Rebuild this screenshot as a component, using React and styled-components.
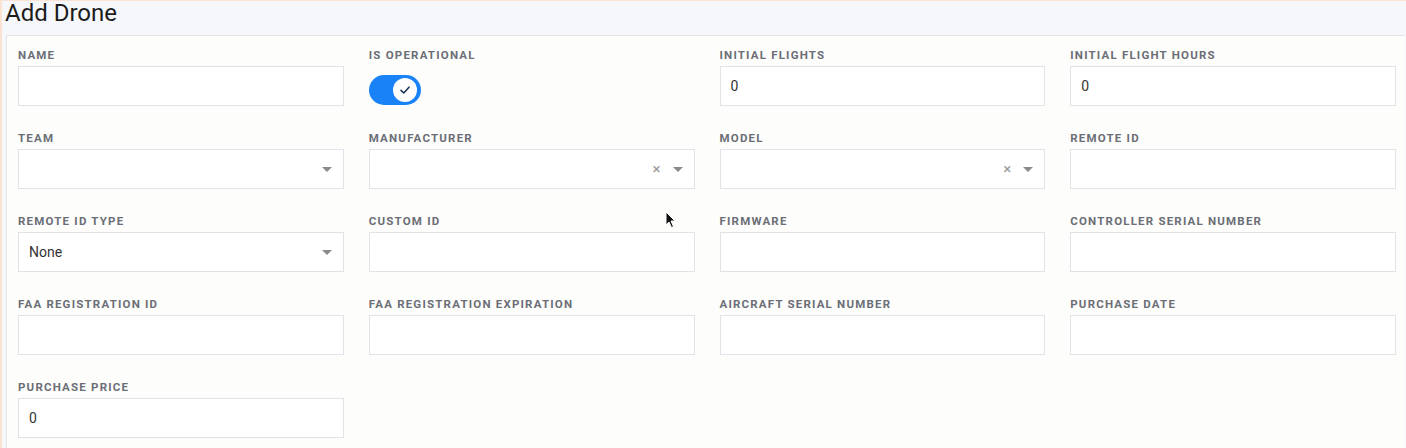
import React from 'react';
import styled, { createGlobalStyle } from 'styled-components';

const Global = createGlobalStyle`
  html, body {
    margin: 0;
    padding: 0;
    background: #f5f7fa;
    font-family: Roboto, "Noto Sans", "Liberation Sans", sans-serif;
  }
  body {
    border-top: 1px solid #fbe2d3;
    border-left: 2px solid #fbe2d3;
    min-height: 447px;
    box-sizing: border-box;
  }
  * { box-sizing: border-box; }
`;

const Page = styled.div`
  position: relative;
  padding: 0 1px 0 4px;
`;

const Title = styled.h1`
  margin: 0 0 0 -1px;
  height: 34px;
  font-size: 24px;
  line-height: 25px;
  font-weight: 400;
  color: #1c1c1c;
`;

const Card = styled.div`
  background: #fdfdfc;
  border: 1px solid #e3e4e6;
  border-right: none;
  padding: 11px 9px 10px 11px;
  display: grid;
  grid-template-columns: repeat(4, 1fr);
  column-gap: 25px;
  row-gap: 24px;
`;

const Field = styled.div`
  display: flex;
  flex-direction: column;
`;

const Label = styled.label`
  font-size: 11.5px;
  line-height: 16px;
  font-weight: 700;
  letter-spacing: 1.2px;
  text-transform: uppercase;
  color: #6b6e76;
  margin-bottom: 3px;
`;

const Box = styled.div`
  height: 40px;
  border: 1px solid #e2e3e6;
  background: #fff;
  display: flex;
  align-items: center;
  padding: 0 11px 0 10px;
  font-size: 14px;
  color: #333;
`;

const Value = styled.span`
  flex: 1;
`;

const Caret = styled.span`
  width: 0;
  height: 0;
  border-left: 5px solid transparent;
  border-right: 5px solid transparent;
  border-top: 5px solid #8a8a8a;
  margin-left: ${p => p.$gap || 0}px;
`;

const Clear = styled.span`
  font-size: 15px;
  color: #9a9a9a;
  line-height: 1;
`;

const ToggleWrap = styled.div`
  height: 40px;
  display: flex;
  align-items: center;
  padding-top: 8px;
`;

const Toggle = styled.div`
  width: 52px;
  height: 30px;
  border-radius: 15px;
  background: #1a82f7;
  display: flex;
  align-items: center;
  justify-content: flex-end;
  padding-right: 4px;
`;

const Knob = styled.div`
  width: 24px;
  height: 24px;
  border-radius: 50%;
  background: #fff;
  display: flex;
  align-items: center;
  justify-content: center;
`;

const Cursor = styled.svg`
  position: absolute;
  left: 663px;
  top: 210px;
`;

function Input({ value }) {
  return (
    <Box>
      <Value>{value}</Value>
    </Box>
  );
}

function Select({ value, clearable }) {
  return (
    <Box>
      <Value>{value}</Value>
      {clearable && <Clear>×</Clear>}
      <Caret $gap={clearable ? 12 : 0} />
    </Box>
  );
}

const fields = [
  { label: 'Name', type: 'input' },
  { label: 'Is Operational', type: 'toggle' },
  { label: 'Initial Flights', type: 'input', value: '0' },
  { label: 'Initial Flight Hours', type: 'input', value: '0' },
  { label: 'Team', type: 'select' },
  { label: 'Manufacturer', type: 'select', clearable: true },
  { label: 'Model', type: 'select', clearable: true },
  { label: 'Remote ID', type: 'input' },
  { label: 'Remote ID Type', type: 'select', value: 'None' },
  { label: 'Custom ID', type: 'input' },
  { label: 'Firmware', type: 'input' },
  { label: 'Controller Serial Number', type: 'input' },
  { label: 'FAA Registration ID', type: 'input' },
  { label: 'FAA Registration Expiration', type: 'input' },
  { label: 'Aircraft Serial Number', type: 'input' },
  { label: 'Purchase Date', type: 'input' },
  { label: 'Purchase Price', type: 'input', value: '0' },
];

export default function App() {
  return (
    <>
      <Global />
      <Page>
        <Title>Add Drone</Title>
        <Card>
          {fields.map(f => (
            <Field key={f.label}>
              <Label>{f.label}</Label>
              {f.type === 'input' && <Input value={f.value} />}
              {f.type === 'select' && <Select value={f.value} clearable={f.clearable} />}
              {f.type === 'toggle' && (
                <ToggleWrap>
                  <Toggle>
                    <Knob>
                      <svg width="12" height="12" viewBox="0 0 12 12">
                        <path d="M2 6.3 L4.8 9 L10 3.2" fill="none" stroke="#1d3557" strokeWidth="1.6" strokeLinecap="round" strokeLinejoin="round" />
                      </svg>
                    </Knob>
                  </Toggle>
                </ToggleWrap>
              )}
            </Field>
          ))}
        </Card>
        <Cursor width="12" height="18" viewBox="0 0 12 18">
          <path d="M1 1 L1 14 L4 11 L6.5 16.5 L8.5 15.5 L6 10 L10 10 Z" fill="#111" stroke="#fff" strokeWidth="1" />
        </Cursor>
      </Page>
    </>
  );
}
